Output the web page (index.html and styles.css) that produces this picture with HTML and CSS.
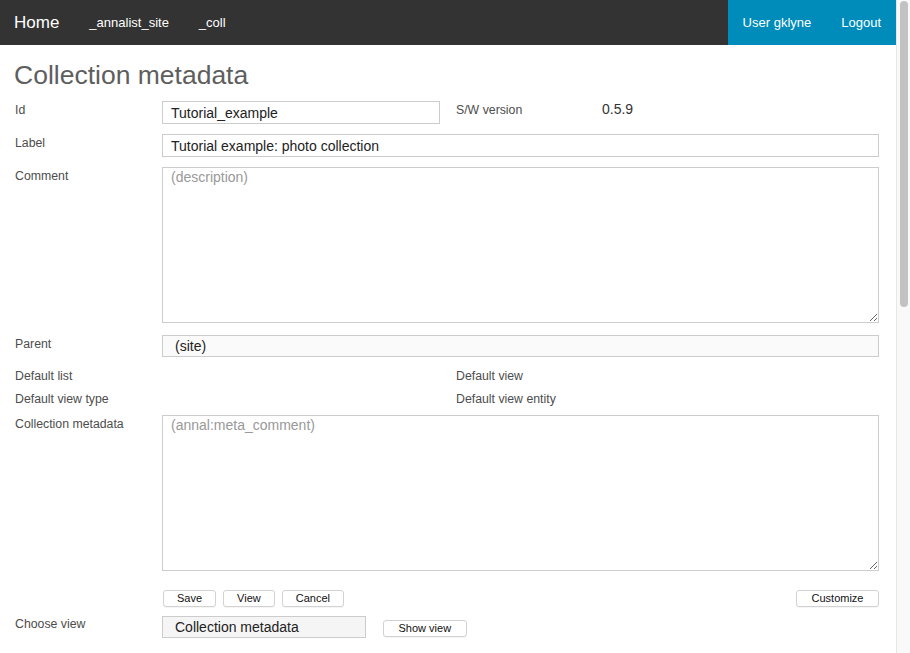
FILE: index.html
```html
<!DOCTYPE html>
<html lang="en">
<head>
<meta charset="utf-8">
<title>Collection metadata</title>
<link rel="stylesheet" href="styles.css">
</head>
<body>
<div class="app">
  <div class="page">
    <nav class="topbar">
      <a class="brand" href="#">Home</a>
      <a class="navlink" href="#">_annalist_site</a>
      <a class="navlink" href="#">_coll</a>
      <div class="userbox">
        <a class="navlink" href="#">User gklyne</a>
        <a class="navlink" href="#">Logout</a>
      </div>
    </nav>
    <main class="content">
      <h1 class="title">Collection metadata</h1>
      <form class="form">
        <div class="row row-id">
          <div class="half">
            <label class="lbl">Id</label>
            <input class="inp inp-id" type="text" value="Tutorial_example">
          </div>
          <div class="half half-right">
            <span class="lbl lbl-r">S/W version</span>
            <span class="val">0.5.9</span>
          </div>
        </div>
        <div class="row">
          <label class="lbl">Label</label>
          <input class="inp grow" type="text" value="Tutorial example: photo collection">
        </div>
        <div class="row">
          <label class="lbl">Comment</label>
          <textarea class="txt grow" placeholder="(description)"></textarea>
        </div>
        <div class="row row-parent">
          <label class="lbl">Parent</label>
          <div class="sel grow">(site)</div>
        </div>
        <div class="row row-plain">
          <div class="half"><span class="lbl">Default list</span></div>
          <div class="half half-right"><span class="lbl lbl-r">Default view</span></div>
        </div>
        <div class="row row-plain row-tight">
          <div class="half"><span class="lbl">Default view type</span></div>
          <div class="half half-right"><span class="lbl lbl-r">Default view entity</span></div>
        </div>
        <div class="row row-meta">
          <label class="lbl">Collection metadata</label>
          <textarea class="txt grow" placeholder="(annal:meta_comment)"></textarea>
        </div>
        <div class="row row-buttons">
          <div class="btngroup">
            <button type="button" class="btn">Save</button>
            <button type="button" class="btn">View</button>
            <button type="button" class="btn">Cancel</button>
          </div>
          <button type="button" class="btn btn-wide">Customize</button>
        </div>
        <div class="row row-choose">
          <label class="lbl lbl-choose">Choose view</label>
          <div class="sel sel-view">Collection metadata</div>
          <button type="button" class="btn btn-wide btn-show">Show view</button>
        </div>
      </form>
    </main>
  </div>
  <div class="scrollbar"><div class="thumb"></div></div>
</div>
</body>
</html>
```
FILE: styles.css
```css
html, body {
  margin: 0;
  padding: 0;
  background: #fff;
}
body {
  font-family: "Liberation Sans", Arial, Helvetica, sans-serif;
  color: #222;
}
.app {
  display: flex;
  height: 653px;
  overflow: hidden;
}
.page {
  flex: 1;
  min-width: 0;
}
.scrollbar {
  width: 8px;
  border-left: 1px solid #e6e6e6;
  background: #f9f9f9;
  padding: 1px 2px 0 3px;
  flex: none;
}
.thumb {
  width: 8px;
  height: 306px;
  background: #c2c2c2;
  border-radius: 4px;
}

/* top bar */
.topbar {
  display: flex;
  align-items: center;
  height: 45px;
  background: #333;
}
.topbar a {
  color: #fff;
  text-decoration: none;
  line-height: 45px;
}
.brand {
  font-size: 17px;
  padding: 0 15px 0 14px;
}
.navlink {
  font-size: 13px;
  padding: 0 15px;
}
.userbox {
  margin-left: auto;
  display: flex;
  height: 45px;
  background: #008cba;
}

/* content */
.content {
  padding: 0 17px 0 14px;
}
.title {
  margin: 14px 0 10px;
  font-size: 26.5px;
  line-height: 32px;
  font-weight: normal;
  color: #5e5e5e;
}
.row {
  display: flex;
  align-items: flex-start;
  margin-bottom: 10px;
}
.half {
  display: flex;
  align-items: flex-start;
  width: 442px;
}
.half-right {
  width: auto;
  flex: 1;
}
.lbl {
  box-sizing: border-box;
  width: 148px;
  flex: none;
  padding-left: 1px;
  font-size: 12.3px;
  line-height: 18px;
  color: #4d4d4d;
}
.lbl-r {
  width: 146px;
  padding-left: 0;
}
.lbl-choose {
  margin-top: -1px;
}
.val {
  font-size: 14px;
  line-height: 16px;
  color: #333;
}
.grow {
  flex: 1;
  min-width: 0;
}
.inp {
  box-sizing: border-box;
  height: 23px;
  margin: 0;
  padding: 0 8px;
  border: 1px solid #cccccc;
  border-radius: 0;
  font-family: inherit;
  font-size: 14px;
  color: #222;
  background: #fff;
  outline: none;
}
.inp-id {
  width: 278px;
}
.txt {
  box-sizing: border-box;
  height: 156px;
  margin: 0;
  padding: 1px 8px;
  border: 1px solid #cccccc;
  font-family: inherit;
  font-size: 14px;
  line-height: 16px;
  color: #222;
  resize: both;
  outline: none;
}
.txt::placeholder {
  color: #999;
}
.row-parent {
  margin-top: 12px;
}
.sel {
  box-sizing: border-box;
  height: 22px;
  padding: 0 12px;
  border: 1px solid #cccccc;
  background: #fafafa;
  font-size: 14px;
  line-height: 20px;
  color: #222;
}
.row-plain {
  margin-bottom: 5px;
}
.row-tight {
  margin-bottom: 7px;
}
.row-buttons {
  margin: 19px 0 9px 149px;
  justify-content: space-between;
  align-items: center;
}
.btngroup {
  display: flex;
  gap: 7px;
}
.btn {
  box-sizing: border-box;
  height: 17px;
  margin: 0;
  padding: 0 13px;
  border: 1px solid #d2d2d2;
  border-radius: 3px;
  background: #fff;
  box-shadow: 0 1px 0 rgba(0, 0, 0, 0.04);
  font-family: inherit;
  font-size: 11px;
  line-height: 15px;
  color: #111;
}
.btn-wide {
  padding: 0 14.5px;
}
.row-choose {
  align-items: flex-start;
}
.sel-view {
  width: 204px;
  background: #f5f5f5;
}
.btn-show {
  margin: 4px 0 0 17px;
}
```
